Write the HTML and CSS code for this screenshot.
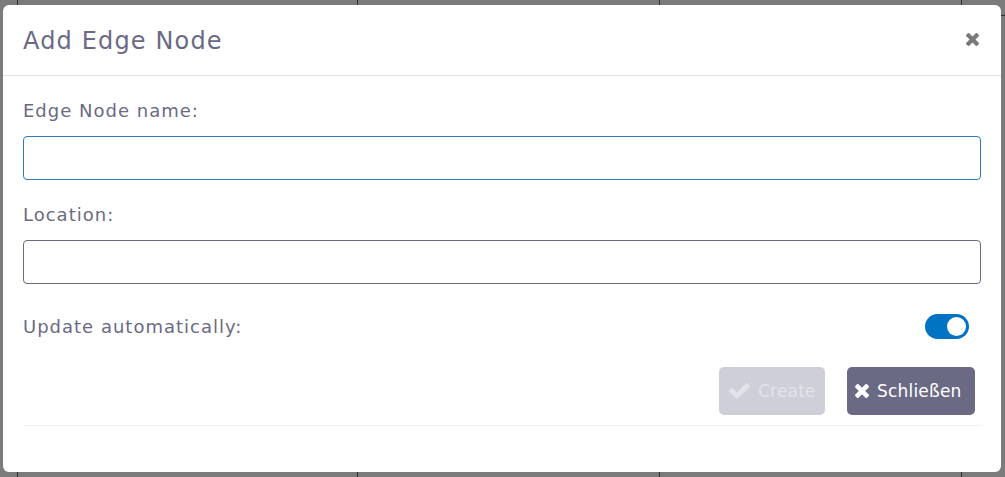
FILE: index.html
```html
<!DOCTYPE html>
<html lang="de">
<head>
<meta charset="utf-8">
<title>Add Edge Node</title>
<link rel="stylesheet" href="styles.css">
</head>
<body>
<div class="backdrop">
  <div class="col col-a"></div>
  <div class="col col-b"></div>
  <div class="col col-c"></div>
  <div class="col col-d"></div>
  <div class="col col-e"><div class="row-line"></div></div>
</div>

<div class="modal" role="dialog" aria-labelledby="modal-title">
  <div class="modal-header">
    <h4 class="modal-title" id="modal-title">Add Edge Node</h4>
    <button class="close" type="button" aria-label="Close">
      <svg class="icon-times" viewBox="110 366 1188 1188" aria-hidden="true"><path d="M1298 1322q0 40-28 68l-136 136q-28 28-68 28t-68-28l-294-294-294 294q-28 28-68 28t-68-28l-136-136q-28-28-28-68t28-68l294-294-294-294q-28-28-28-68t28-68l136-136q28-28 68-28t68 28l294 294 294-294q28-28 68-28t68 28l136 136q28 28 28 68t-28 68l-294 294 294 294q28 28 28 68z"/></svg>
    </button>
  </div>
  <div class="modal-body">
    <label class="field-label" for="name">Edge Node name:</label>
    <input class="field-input is-focused" id="name" type="text">
    <label class="field-label second" for="loc">Location:</label>
    <input class="field-input" id="loc" type="text">
    <div class="toggle-row">
      <span class="field-label inline">Update automatically:</span>
      <span class="switch"><span class="knob"></span></span>
    </div>
    <div class="actions">
      <button class="btn btn-disabled" type="button">
        <svg class="icon-check" viewBox="121 334 1550 1188" aria-hidden="true"><path d="M1671 566q0 40-28 68l-724 724-136 136q-28 28-68 28t-68-28l-136-136-362-362q-28-28-28-68t28-68l136-136q28-28 68-28t68 28l294 295 656-657q28-28 68-28t68 28l136 136q28 28 28 68z"/></svg>
        Create
      </button>
      <button class="btn btn-primary" type="button">
        <svg class="icon-x" viewBox="110 366 1188 1188" aria-hidden="true"><path d="M1298 1322q0 40-28 68l-136 136q-28 28-68 28t-68-28l-294-294-294 294q-28 28-68 28t-68-28l-136-136q-28-28-28-68t28-68l294-294-294-294q-28-28-28-68t28-68l136-136q28-28 68-28t68 28l294 294 294-294q28-28 68-28t68 28l136 136q28 28 28 68t-28 68l-294 294 294 294q28 28 28 68z"/></svg>
        Schließen
      </button>
    </div>
    <div class="footer-line"></div>
  </div>
</div>
</body>
</html>
```

FILE: styles.css
```css
* { box-sizing: border-box; }

html, body {
  margin: 0;
  height: 100%;
}

body {
  background: #7b7b7b;
  font-family: "DejaVu Sans", "Liberation Sans", sans-serif;
  overflow: hidden;
}

.backdrop {
  display: flex;
  height: 100vh;
}

.col { height: 100%; }
.col-a { width: 17px; }
.col-b { width: 340px; border-left: 1px solid #2e2e3c; }
.col-c { width: 302px; border-left: 1px solid #2e2e3c; }
.col-d { width: 302px; border-left: 1px solid #2e2e3c; }
.col-e { flex: 1; border-left: 1px solid #2e2e3c; }
.row-line {
  margin-top: 15px;
  border-top: 1px solid #2e2e3c;
}

.modal {
  position: fixed;
  top: 5px;
  left: 3px;
  width: 998px;
  height: 467px;
  background: #fff;
  border-radius: 6px;
  color: #6b6a85;
}

.modal-header {
  height: 71px;
  border-bottom: 1px solid #e5e5e5;
  display: flex;
  align-items: center;
  justify-content: space-between;
  padding: 0 22px 0 20px;
}

.modal-title {
  margin: 0;
  font-size: 24px;
  font-weight: normal;
  letter-spacing: 1.15px;
  line-height: 1;
  color: #6b6a85;
  padding-top: 1px;
}

.close {
  border: 0;
  background: none;
  padding: 0;
  width: 13px;
  height: 13px;
  display: flex;
  margin-bottom: 1px;
}

.icon-times {
  width: 13px;
  height: 13px;
  fill: #7a7a7a;
}

.modal-body {
  padding: 21px 20px 0;
  display: flex;
  flex-direction: column;
}

.field-label {
  font-size: 18px;
  line-height: 27px;
  letter-spacing: 1px;
  color: #6b6a85;
  margin-bottom: 12px;
}

.field-label.second { margin-top: 21px; }

.field-label.inline { margin: 0; }

.field-input {
  height: 44px;
  width: 100%;
  border: 1px solid #6b6a85;
  border-radius: 4px;
  background: #fff;
  font: inherit;
  padding: 0 12px;
  outline: none;
}

.field-input.is-focused { border-color: #2f7bbf; }

.toggle-row {
  margin-top: 30px;
  height: 25px;
  display: flex;
  align-items: center;
  justify-content: space-between;
  padding-right: 12px;
}

.switch {
  width: 44px;
  height: 25px;
  border-radius: 13px;
  background: #0073c2;
  display: flex;
  align-items: center;
  justify-content: flex-end;
  padding-right: 3px;
}

.knob {
  width: 19px;
  height: 19px;
  border-radius: 50%;
  background: #fff;
}

.actions {
  margin-top: 28px;
  display: flex;
  justify-content: flex-end;
  gap: 22px;
  padding-right: 6px;
}

.btn {
  height: 48px;
  border: 0;
  border-radius: 5px;
  display: flex;
  align-items: center;
  gap: 8px;
  font-family: "DejaVu Sans", "Liberation Sans", sans-serif;
  font-size: 17px;
  letter-spacing: 0.2px;
  padding: 0 9px;
}

.btn-disabled {
  background: #cfcfd9;
  color: #e2e2e9;
  width: 106px;
  padding-left: 10px;
}

.btn-primary {
  background: #6b6a85;
  color: #fff;
  width: 128px;
  padding-left: 8px;
}

.icon-check {
  width: 21px;
  height: 16px;
  fill: #e2e2e9;
  flex: none;
}

.icon-x {
  width: 14px;
  height: 14px;
  fill: #fff;
  flex: none;
}

.footer-line {
  margin-top: 10px;
  border-top: 1px solid #f0f0f3;
}
```
